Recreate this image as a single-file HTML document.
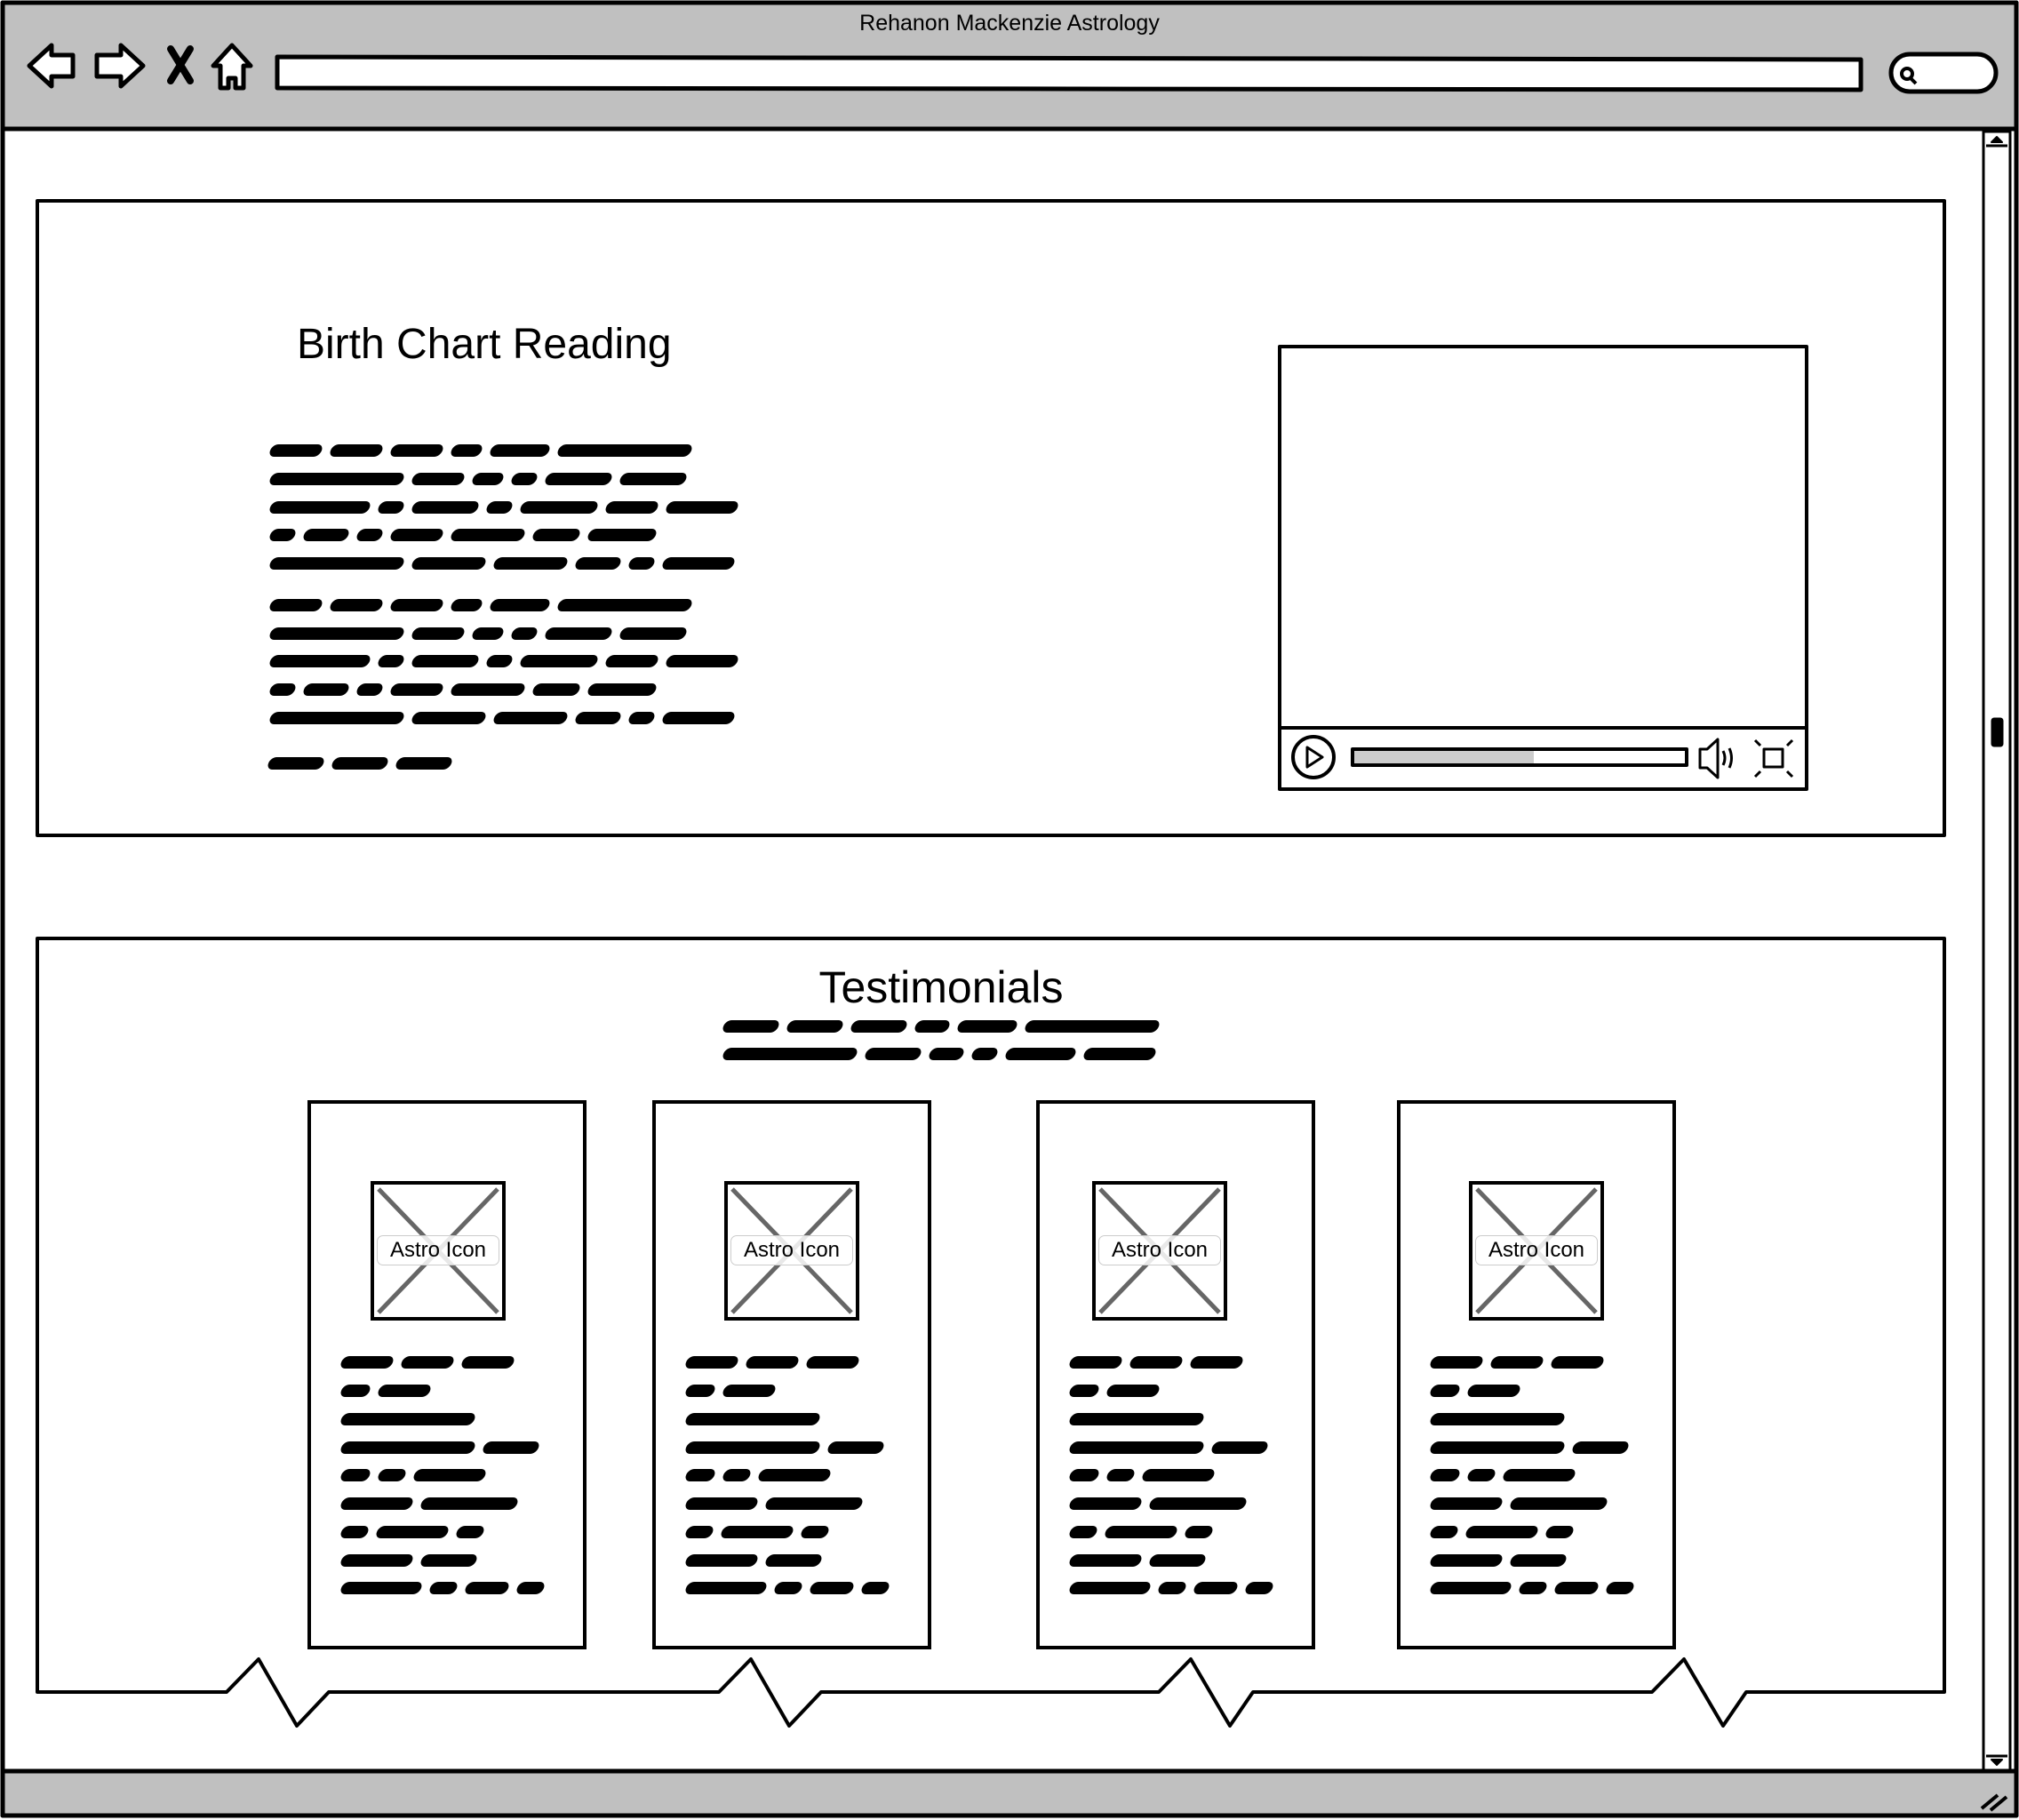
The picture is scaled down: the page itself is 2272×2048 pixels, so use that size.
<!DOCTYPE html>
<html><head><meta charset="utf-8"><style>
html,body{margin:0;padding:0;width:2272px;height:2048px;overflow:hidden;background:#fff;font-family:"Liberation Sans",sans-serif}
.abs{position:absolute}
.ln{position:absolute;display:flex;height:14px}
.ln i{display:block;height:14px;background:#000;border-radius:7px;margin-right:10px;transform:skewX(-20deg)}
.t{position:absolute;color:#000;white-space:nowrap}
</style></head><body>
<svg class="abs" style="left:0;top:0" width="2272" height="2048" viewBox="0 0 2272 2048">
<g fill="none" stroke="#000" stroke-linejoin="round">
<rect x="3" y="3" width="2266" height="2040" fill="#fff" stroke-width="5"/>
<rect x="3" y="3" width="2266" height="142" fill="#c0c0c0" stroke-width="5"/>
<rect x="3" y="1993" width="2266" height="50" fill="#c0c0c0" stroke-width="5"/>
<path d="M33 74 L58 51 L58 62 L82 62 L82 86 L58 86 L58 97 Z" fill="#fff" stroke-width="5"/>
<path d="M161 74 L136 51 L136 62 L109 62 L109 86 L136 86 L136 97 Z" fill="#fff" stroke-width="5"/>
<path d="M192 55 L214 91 M214 55 L192 91" stroke-width="8" stroke-linecap="round"/>
<path d="M261 51 L282 74 L274 74 L274 99 L265 99 L265 88 L257 88 L257 99 L248 99 L248 74 L240 74 Z" fill="#fff" stroke-width="5"/>
<path d="M312 64 L2094 67 L2094 101 L312 99 Z" fill="#fff" stroke-width="5"/>
<rect x="2128" y="61" width="118" height="42" rx="21" fill="#fff" stroke-width="5"/>
<circle cx="2146" cy="83" r="6" stroke-width="4"/><path d="M2150 88 L2156 94" stroke-width="4"/>
<rect x="2232" y="148" width="30" height="1844" fill="#fff" stroke-width="3"/>
<path d="M2235 164 L2259 164 M2235 1976 L2259 1976" stroke-width="3"/>
<path d="M2241 160 L2247 154 L2253 160 Z M2241 1980 L2247 1986 L2253 1980 Z" fill="#000" stroke-width="2"/>
<rect x="2241" y="808" width="13" height="32" rx="3" fill="#000" stroke-width="1"/>
<path d="M2230 2035 L2248 2020 M2240 2037 L2258 2022" stroke-width="4"/>
<rect x="42" y="226" width="2146" height="714" stroke-width="4"/>
<path d="M42 1056 L2188 1056 L2188 1904 L1965 1904 L1939 1942 L1895 1867 L1859 1904 L1410 1904 L1384 1942 L1340 1867 L1304 1904 L924 1904 L888 1942 L845 1867 L809 1904 L370 1904 L334 1942 L291 1867 L255 1904 L42 1904 Z" stroke-width="4"/>
<rect x="1440" y="390" width="593" height="498" stroke-width="4"/>
<path d="M1440 819 L2033 819" stroke-width="4"/>
<circle cx="1478" cy="852" r="23" stroke-width="4"/>
<path d="M1471 841 L1488 852 L1471 863 Z" stroke-width="3"/>
<rect x="1522" y="843" width="204" height="18" fill="#ccc" stroke="none"/>
<rect x="1522" y="843" width="376" height="18" stroke-width="4"/>
<path d="M1913 843 L1921 843 L1933 832 L1933 875 L1921 864 L1913 864 Z" stroke-width="3"/>
<path d="M1939 845 Q1943 853 1939 861 M1946 842 Q1951 853 1946 864" stroke-width="3"/>
<rect x="1985" y="843" width="21" height="20" stroke-width="3"/>
<path d="M1975 833 L1981 839 M2017 833 L2011 839 M1975 874 L1981 868 M2017 874 L2011 868" stroke-width="3"/>
</g>
<g fill="#fff" stroke="#000" stroke-width="4">
<rect x="348" y="1240" width="310" height="614"/>
<rect x="736" y="1240" width="310" height="614"/>
<rect x="1168" y="1240" width="310" height="614"/>
<rect x="1574" y="1240" width="310" height="614"/>
</g>
</svg>

<div class="t" style="left:0;width:2272px;text-align:center;top:12px;font-size:25px">Rehanon Mackenzie Astrology</div>
<div class="t" style="left:334px;top:360px;font-size:48px">Birth Chart Reading</div>
<div class="t" style="left:0;width:2118px;text-align:center;top:1082px;font-size:50px">Testimonials</div>

<div class="ln" style="left:304px;top:500px"><i style="width:58px"></i><i style="width:58px"></i><i style="width:58px"></i><i style="width:34px"></i><i style="width:66px"></i><i style="width:150px"></i></div>
<div class="ln" style="left:304px;top:532px"><i style="width:150px"></i><i style="width:58px"></i><i style="width:34px"></i><i style="width:28px"></i><i style="width:74px"></i><i style="width:74px"></i></div>
<div class="ln" style="left:304px;top:564px"><i style="width:112px"></i><i style="width:28px"></i><i style="width:74px"></i><i style="width:28px"></i><i style="width:86px"></i><i style="width:58px"></i><i style="width:80px"></i></div>
<div class="ln" style="left:304px;top:595px"><i style="width:28px"></i><i style="width:50px"></i><i style="width:28px"></i><i style="width:58px"></i><i style="width:82px"></i><i style="width:52px"></i><i style="width:76px"></i></div>
<div class="ln" style="left:304px;top:627px"><i style="width:150px"></i><i style="width:82px"></i><i style="width:82px"></i><i style="width:50px"></i><i style="width:28px"></i><i style="width:80px"></i></div>
<div class="ln" style="left:304px;top:674px"><i style="width:58px"></i><i style="width:58px"></i><i style="width:58px"></i><i style="width:34px"></i><i style="width:66px"></i><i style="width:150px"></i></div>
<div class="ln" style="left:304px;top:706px"><i style="width:150px"></i><i style="width:58px"></i><i style="width:34px"></i><i style="width:28px"></i><i style="width:74px"></i><i style="width:74px"></i></div>
<div class="ln" style="left:304px;top:737px"><i style="width:112px"></i><i style="width:28px"></i><i style="width:74px"></i><i style="width:28px"></i><i style="width:86px"></i><i style="width:58px"></i><i style="width:80px"></i></div>
<div class="ln" style="left:304px;top:769px"><i style="width:28px"></i><i style="width:50px"></i><i style="width:28px"></i><i style="width:58px"></i><i style="width:82px"></i><i style="width:52px"></i><i style="width:76px"></i></div>
<div class="ln" style="left:304px;top:801px"><i style="width:150px"></i><i style="width:82px"></i><i style="width:82px"></i><i style="width:50px"></i><i style="width:28px"></i><i style="width:80px"></i></div>
<div class="ln" style="left:302px;top:852px"><i style="width:62px"></i><i style="width:62px"></i><i style="width:62px"></i></div>

<div class="ln" style="left:814px;top:1148px"><i style="width:62px"></i><i style="width:62px"></i><i style="width:62px"></i><i style="width:38px"></i><i style="width:66px"></i><i style="width:150px"></i></div>
<div class="ln" style="left:814px;top:1179px"><i style="width:150px"></i><i style="width:62px"></i><i style="width:38px"></i><i style="width:28px"></i><i style="width:78px"></i><i style="width:80px"></i></div>

<div class="abs" style="left:348px;top:1240px;width:310px;height:614px">
<svg class="abs" style="left:69px;top:89px" width="152" height="157"><rect x="2" y="2" width="148" height="153" fill="#fff" stroke="#000" stroke-width="4"/><path d="M9 9 L143 148 M143 9 L9 148" stroke="#666" stroke-width="5"/></svg>
<div class="t" style="left:76px;top:150px;width:136px;height:32px;line-height:32px;text-align:center;font-size:24px;background:rgba(255,255,255,.85);border:1.5px solid #ccc;border-radius:7px">Astro Icon</div>
<div class="ln" style="left:36px;top:286px"><i style="width:58px"></i><i style="width:58px"></i><i style="width:58px"></i></div>
<div class="ln" style="left:36px;top:318px"><i style="width:32px"></i><i style="width:58px"></i></div>
<div class="ln" style="left:36px;top:350px"><i style="width:150px"></i></div>
<div class="ln" style="left:36px;top:382px"><i style="width:150px"></i><i style="width:62px"></i></div>
<div class="ln" style="left:36px;top:413px"><i style="width:32px"></i><i style="width:30px"></i><i style="width:80px"></i></div>
<div class="ln" style="left:36px;top:445px"><i style="width:80px"></i><i style="width:108px"></i></div>
<div class="ln" style="left:36px;top:477px"><i style="width:30px"></i><i style="width:80px"></i><i style="width:30px"></i></div>
<div class="ln" style="left:36px;top:509px"><i style="width:80px"></i><i style="width:62px"></i></div>
<div class="ln" style="left:36px;top:540px"><i style="width:90px"></i><i style="width:30px"></i><i style="width:48px"></i><i style="width:30px"></i></div>
</div>
<div class="abs" style="left:736px;top:1240px;width:310px;height:614px">
<svg class="abs" style="left:79px;top:89px" width="152" height="157"><rect x="2" y="2" width="148" height="153" fill="#fff" stroke="#000" stroke-width="4"/><path d="M9 9 L143 148 M143 9 L9 148" stroke="#666" stroke-width="5"/></svg>
<div class="t" style="left:86px;top:150px;width:136px;height:32px;line-height:32px;text-align:center;font-size:24px;background:rgba(255,255,255,.85);border:1.5px solid #ccc;border-radius:7px">Astro Icon</div>
<div class="ln" style="left:36px;top:286px"><i style="width:58px"></i><i style="width:58px"></i><i style="width:58px"></i></div>
<div class="ln" style="left:36px;top:318px"><i style="width:32px"></i><i style="width:58px"></i></div>
<div class="ln" style="left:36px;top:350px"><i style="width:150px"></i></div>
<div class="ln" style="left:36px;top:382px"><i style="width:150px"></i><i style="width:62px"></i></div>
<div class="ln" style="left:36px;top:413px"><i style="width:32px"></i><i style="width:30px"></i><i style="width:80px"></i></div>
<div class="ln" style="left:36px;top:445px"><i style="width:80px"></i><i style="width:108px"></i></div>
<div class="ln" style="left:36px;top:477px"><i style="width:30px"></i><i style="width:80px"></i><i style="width:30px"></i></div>
<div class="ln" style="left:36px;top:509px"><i style="width:80px"></i><i style="width:62px"></i></div>
<div class="ln" style="left:36px;top:540px"><i style="width:90px"></i><i style="width:30px"></i><i style="width:48px"></i><i style="width:30px"></i></div>
</div>
<div class="abs" style="left:1168px;top:1240px;width:310px;height:614px">
<svg class="abs" style="left:61px;top:89px" width="152" height="157"><rect x="2" y="2" width="148" height="153" fill="#fff" stroke="#000" stroke-width="4"/><path d="M9 9 L143 148 M143 9 L9 148" stroke="#666" stroke-width="5"/></svg>
<div class="t" style="left:68px;top:150px;width:136px;height:32px;line-height:32px;text-align:center;font-size:24px;background:rgba(255,255,255,.85);border:1.5px solid #ccc;border-radius:7px">Astro Icon</div>
<div class="ln" style="left:36px;top:286px"><i style="width:58px"></i><i style="width:58px"></i><i style="width:58px"></i></div>
<div class="ln" style="left:36px;top:318px"><i style="width:32px"></i><i style="width:58px"></i></div>
<div class="ln" style="left:36px;top:350px"><i style="width:150px"></i></div>
<div class="ln" style="left:36px;top:382px"><i style="width:150px"></i><i style="width:62px"></i></div>
<div class="ln" style="left:36px;top:413px"><i style="width:32px"></i><i style="width:30px"></i><i style="width:80px"></i></div>
<div class="ln" style="left:36px;top:445px"><i style="width:80px"></i><i style="width:108px"></i></div>
<div class="ln" style="left:36px;top:477px"><i style="width:30px"></i><i style="width:80px"></i><i style="width:30px"></i></div>
<div class="ln" style="left:36px;top:509px"><i style="width:80px"></i><i style="width:62px"></i></div>
<div class="ln" style="left:36px;top:540px"><i style="width:90px"></i><i style="width:30px"></i><i style="width:48px"></i><i style="width:30px"></i></div>
</div>
<div class="abs" style="left:1574px;top:1240px;width:310px;height:614px">
<svg class="abs" style="left:79px;top:89px" width="152" height="157"><rect x="2" y="2" width="148" height="153" fill="#fff" stroke="#000" stroke-width="4"/><path d="M9 9 L143 148 M143 9 L9 148" stroke="#666" stroke-width="5"/></svg>
<div class="t" style="left:86px;top:150px;width:136px;height:32px;line-height:32px;text-align:center;font-size:24px;background:rgba(255,255,255,.85);border:1.5px solid #ccc;border-radius:7px">Astro Icon</div>
<div class="ln" style="left:36px;top:286px"><i style="width:58px"></i><i style="width:58px"></i><i style="width:58px"></i></div>
<div class="ln" style="left:36px;top:318px"><i style="width:32px"></i><i style="width:58px"></i></div>
<div class="ln" style="left:36px;top:350px"><i style="width:150px"></i></div>
<div class="ln" style="left:36px;top:382px"><i style="width:150px"></i><i style="width:62px"></i></div>
<div class="ln" style="left:36px;top:413px"><i style="width:32px"></i><i style="width:30px"></i><i style="width:80px"></i></div>
<div class="ln" style="left:36px;top:445px"><i style="width:80px"></i><i style="width:108px"></i></div>
<div class="ln" style="left:36px;top:477px"><i style="width:30px"></i><i style="width:80px"></i><i style="width:30px"></i></div>
<div class="ln" style="left:36px;top:509px"><i style="width:80px"></i><i style="width:62px"></i></div>
<div class="ln" style="left:36px;top:540px"><i style="width:90px"></i><i style="width:30px"></i><i style="width:48px"></i><i style="width:30px"></i></div>
</div>
</body></html>
